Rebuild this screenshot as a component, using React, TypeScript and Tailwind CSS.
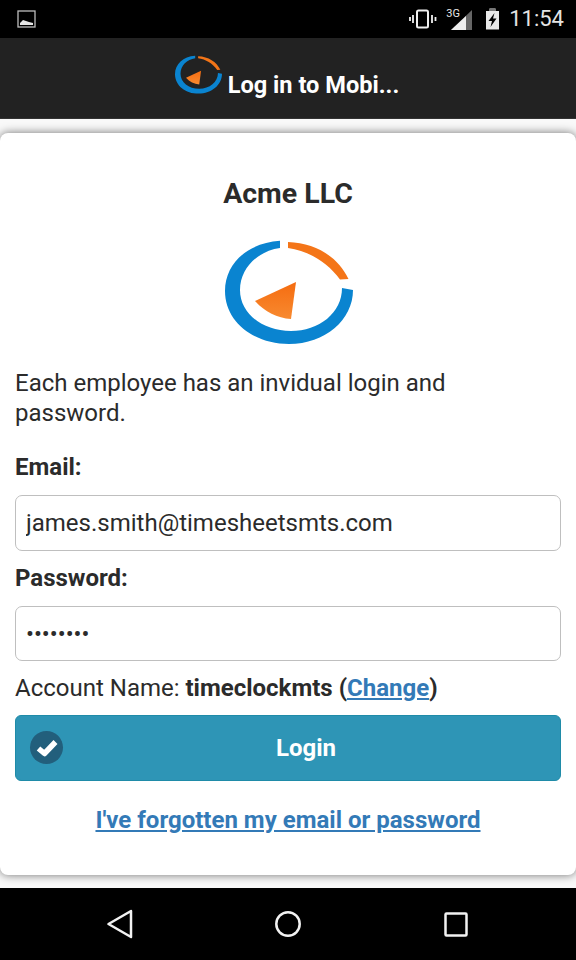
import React from 'react';

const Logo = ({ className }: { className: string }) => (
  <svg className={className} viewBox="225 240 128 104">
    <defs>
      <linearGradient id="wedge" x1="0" y1="0" x2="0" y2="1">
        <stop offset="0" stopColor="#f56c10" />
        <stop offset="1" stopColor="#f88a30" />
      </linearGradient>
    </defs>
    <path
      d="M280 240.8 C247 243 225 264 225 291 C225 322 254 344 289 344 C325 344 353 320 353 290 L342 288 C342 313 319 331 291 331 C262 331 240 313 240 290 C240 268 258 251 280 248 Z"
      fill="#0a84d0"
    />
    <path d="M288 242 C316 243 338 257 348.500 279 L340 279.500 C327 262 309 251 288 248 Z" fill="#f47518" />
    <path d="M296 282 L255 301 C265 312 277 318 291 319 Z" fill="url(#wedge)" />
  </svg>
);

const StatusBar = () => (
  <div className="h-[38px] bg-black flex items-center pl-[17px] pr-[12px]">
    <svg width="20" height="19" viewBox="0 0 20 19">
      <rect x="1" y="1" width="17" height="16" fill="none" stroke="#bdbdbd" strokeWidth="1.300" />
      <path d="M3 15 L3 13 L6 10 L9 11 L12 12 L16 13 L16 15 Z" fill="#e6e6e6" />
    </svg>
    <div className="ml-auto flex items-center">
      <svg width="28" height="20" viewBox="0 0 28 20">
        <rect x="8" y="1.500" width="11" height="17" rx="1.500" fill="none" stroke="#f0f0f0" strokeWidth="2" />
        <path d="M4 6 V14 M1 8 V12 M23 6 V14 M26.500 8 V12" stroke="#f0f0f0" strokeWidth="1.800" />
      </svg>
      <div className="relative ml-[9px] w-[29px] h-[24px]">
        <svg className="absolute left-0 top-0" width="29" height="24" viewBox="0 0 29 24">
          <path d="M5 23 L26 3 V23 Z" fill="#666666" />
          <path d="M5 23 L20 9 V23 Z" fill="#eeeeee" />
        </svg>
        <span className="absolute left-0 top-0 text-[11px] leading-[13px] text-[#e8e8e8] font-['Roboto',sans-serif]">3G</span>
      </div>
      <svg className="ml-[10px]" width="15" height="22" viewBox="0 0 15 22">
        <path d="M4.500 0.500 H10.500 V3 H14 V21.500 H1 V3 H4.500 Z" fill="#e8e8e8" />
        <path d="M4.500 0.500 H10.500 V3 H4.500 Z" fill="#777777" />
        <path d="M9.500 5 L3.500 13 H7 L5.500 19 L11.500 10.500 H8 Z" fill="#000000" />
      </svg>
      <span className="ml-[9px] text-[22px] leading-none text-[#e4e4e4] font-['Roboto',sans-serif]">11:54</span>
    </div>
  </div>
);

const NavBar = () => (
  <div className="h-[72px] bg-black flex items-center justify-center gap-[140px] pb-[1px]">
    <svg width="28" height="30" viewBox="0 0 28 30">
      <path d="M25 2 L2.500 15 L25 28 Z" fill="none" stroke="#f2f2f2" strokeWidth="2.500" strokeLinejoin="round" />
    </svg>
    <svg width="28" height="28" viewBox="0 0 28 28">
      <circle cx="14" cy="14" r="11.700" fill="none" stroke="#f2f2f2" strokeWidth="2.500" />
    </svg>
    <svg width="28" height="28" viewBox="0 0 28 28">
      <rect x="3.500" y="3.500" width="21" height="22" rx="1" fill="none" stroke="#f2f2f2" strokeWidth="2.500" />
    </svg>
  </div>
);

export default function App() {
  return (
    <div className="w-[576px] h-[960px] flex flex-col bg-[#f9f9f9] overflow-hidden font-['Roboto',sans-serif] text-[#2b2b2b]">
      <StatusBar />
      <div className="h-[81px] bg-[#222222] flex items-start justify-center border-b border-[#333333] pt-[17px]">
        <Logo className="w-[47px] h-[39px] ml-[-2px]" />
        <span className="ml-[6px] mt-[15px] text-[23.600px] leading-[30px] font-bold text-white">Log in to Mobi...</span>
      </div>
      <main className="flex-1 pt-[14px]">
        <div className="h-[742px] bg-white rounded-[8px] shadow-[0_0_10px_rgba(0,0,0,0.55)] px-[15px] pt-[43px]">
          <h1 className="text-center text-[28.500px] leading-[36px] font-bold">Acme LLC</h1>
          <Logo className="block w-[128px] h-[104px] mt-[28px] ml-[210px]" />
          <p className="mt-[24px] text-[24px] leading-[30px]">
            Each employee has an invidual login and
            <br />
            password.
          </p>
          <label className="block mt-[24px] text-[24px] leading-[30px] font-bold">Email:</label>
          <input
            readOnly
            value="james.smith@timesheetsmts.com"
            className="block w-full h-[56px] mt-[13px] px-[10px] rounded-[7px] border border-[#bfbfbf] text-[24px] text-[#2b2b2b] outline-none"
          />
          <label className="block mt-[12px] text-[24px] leading-[30px] font-bold">Password:</label>
          <input
            readOnly
            type="password"
            value="password"
            className="block w-full h-[55px] mt-[13px] px-[10px] rounded-[7px] border border-[#bfbfbf] text-[23.500px] text-[#2b2b2b] outline-none"
          />
          <p className="mt-[12px] text-[24px] leading-[30px]">
            Account Name: <b>timeclockmts</b> <b>(<a href="#" className="text-[#337ab7] underline">Change</a>)</b>
          </p>
          <button className="relative block w-full h-[66px] mt-[12px] rounded-[6px] bg-[#2e95b6] border border-[#1f8ba8] text-white text-[24px] font-bold pl-[36px]">
            <span className="absolute left-[14px] top-[15px] w-[33px] h-[33px] rounded-full bg-[#225f7c] flex items-center justify-center">
              <svg width="22" height="18" viewBox="0 0 22 18">
                <path d="M2.500 9.500 L8.500 14.500 L19.500 3" fill="none" stroke="#ffffff" strokeWidth="5.500" strokeLinejoin="round" />
              </svg>
            </span>
            Login
          </button>
          <a href="#" className="block mt-[24px] text-center text-[24px] leading-[30px] font-bold text-[#337ab7] underline">
            I've forgotten my email or password
          </a>
        </div>
      </main>
      <NavBar />
    </div>
  );
}
